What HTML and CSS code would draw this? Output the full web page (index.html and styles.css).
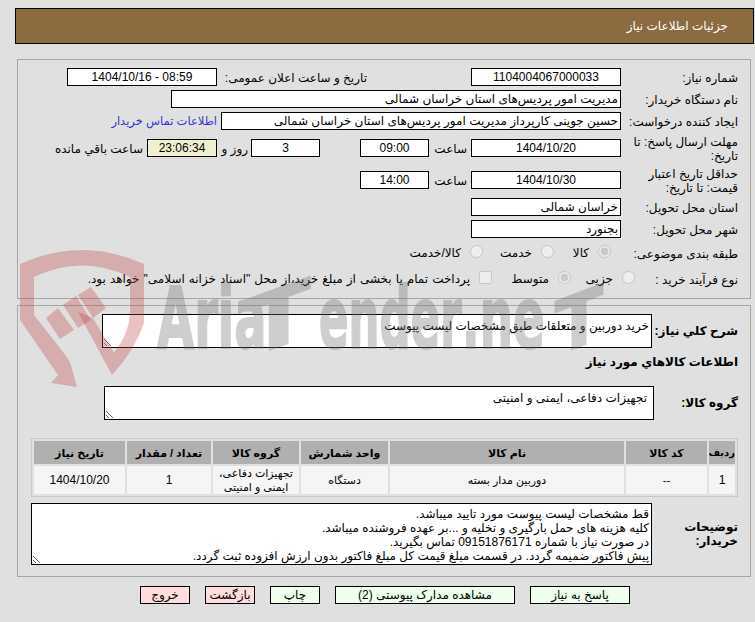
FILE: index.html
```html
<!DOCTYPE html>
<html lang="fa">
<head>
<meta charset="utf-8">
<title>جزئیات اطلاعات نیاز</title>
<link rel="stylesheet" href="styles.css">
</head>
<body>
<header class="title-bar">جزئیات اطلاعات نیاز</header>

<section class="panel panel-top">
  <div class="row">
    <div class="lab">شماره نیاز:</div>
    <div class="box w150 center">1104004067000033</div>
    <div class="lab-mid">تاریخ و ساعت اعلان عمومی:</div>
    <div class="box w150 center">08:59 - 1404/10/16</div>
  </div>
  <div class="row">
    <div class="lab">نام دستگاه خریدار:</div>
    <div class="box w450">مدیریت امور پردیس‌های استان خراسان شمالی</div>
  </div>
  <div class="row">
    <div class="lab">ایجاد کننده درخواست:</div>
    <div class="box w400">حسین جوینی کارپرداز مدیریت امور پردیس‌های استان خراسان شمالی</div>
    <a class="contact" href="#">اطلاعات تماس خریدار</a>
  </div>
  <div class="row tall">
    <div class="lab">مهلت ارسال پاسخ: تا تاریخ:</div>
    <div class="box w150 center">1404/10/20</div>
    <div class="hour">ساعت</div>
    <div class="box w69 center">09:00</div>
    <div class="box w69 center days">3</div>
    <div class="day-word">روز و</div>
    <div class="box w70 center timer">23:06:34</div>
    <div class="remain">ساعت باقي مانده</div>
  </div>
  <div class="row tall">
    <div class="lab">حداقل تاریخ اعتبار قیمت: تا تاریخ:</div>
    <div class="box w150 center">1404/10/30</div>
    <div class="hour">ساعت</div>
    <div class="box w69 center">14:00</div>
  </div>
  <div class="row">
    <div class="lab">استان محل تحویل:</div>
    <div class="box w150">خراسان شمالی</div>
  </div>
  <div class="row">
    <div class="lab">شهر محل تحویل:</div>
    <div class="box w150">بجنورد</div>
  </div>
  <div class="row opts">
    <div class="lab">طبقه بندی موضوعی:</div>
    <label class="opt o57 first10"><input type="radio" name="a" disabled checked>کالا</label>
    <label class="opt o71"><input type="radio" name="a" disabled>خدمت</label>
    <label class="opt"><input type="radio" name="a" disabled>کالا/خدمت</label>
  </div>
  <div class="row opts">
    <div class="lab lab-short">نوع فرآیند خرید :</div>
    <label class="opt o64"><input type="radio" name="b" disabled>جزیی</label>
    <label class="opt o79"><input type="radio" name="b" disabled checked>متوسط</label>
    <label class="opt pay"><input type="checkbox" disabled>پرداخت تمام یا بخشی از مبلغ خرید،از محل "اسناد خزانه اسلامی" خواهد بود.</label>
  </div>
</section>

<section class="panel panel-bottom">
  <div class="row">
    <div class="lab-b w98">شرح کلي نياز:</div>
    <textarea class="area a-need" readonly>خرید دوربین و متعلقات طبق مشخصات لیست پیوست</textarea>
  </div>
  <h2 class="sub">اطلاعات کالاهاي مورد نياز</h2>
  <div class="row group-row">
    <div class="lab-b w96">گروه کالا:</div>
    <textarea class="area a-group" readonly>تجهیزات دفاعی، ایمنی و امنیتی</textarea>
  </div>
  <table class="goods">
    <colgroup>
      <col class="c1"><col class="c2"><col class="c3"><col class="c4"><col class="c5"><col class="c6"><col class="c7">
    </colgroup>
    <thead>
      <tr><th class="th-small">ردیف</th><th>کد کالا</th><th>نام کالا</th><th>واحد شمارش</th><th>گروه کالا</th><th>تعداد / مقدار</th><th>تاریخ نیاز</th></tr>
    </thead>
    <tbody>
      <tr><td class="num">1</td><td>--</td><td>دوربین مدار بسته</td><td>دستگاه</td><td>تجهیزات دفاعی، ایمنی و امنیتی</td><td class="num">1</td><td class="num">1404/10/20</td></tr>
    </tbody>
  </table>
  <div class="row desc-row">
    <div class="lab-b w98">توضیحات خریدار:</div>
    <textarea class="area a-desc" readonly>قط مشخصات لیست پیوست مورد تایید میباشد.
کلیه هزینه های حمل بارگیری و تخلیه و ...بر عهده فروشنده میباشد.
در صورت نیاز با شماره 09151876171 تماس بگیرید.
پیش فاکتور ضمیمه گردد. در قسمت مبلغ قیمت کل مبلغ فاکتور بدون ارزش افزوده ثبت گردد.</textarea>
  </div>
</section>

<nav class="actions">
  <button class="btn go b100">پاسخ به نیاز</button>
  <button class="btn go b180">مشاهده مدارک پیوستی (2)</button>
  <button class="btn go b50">چاپ</button>
  <button class="btn stop b50">بازگشت</button>
  <button class="btn stop b50">خروج</button>
</nav>

<svg class="watermark" viewBox="0 0 755 622" aria-hidden="true">
  <g class="wm-red">
    <path fill-rule="evenodd" d="M20 264Q82 236 144 264L144 323Q135 350 112 375L78 312 93 318 114 353Q128 335 130 315L130 277Q82 254 34 277L34 315 63 352 70 362 77 387 51 383 58 375 20 320Z"/>
    <polygon points="46,318 58,308 74,330 60,339"/>
    <polygon points="63,305 76,296 91,320 78,328"/>
    <polygon points="78,295 91,287 106,308 93,318"/>
  </g>
  <g class="wm-gray">
    <text transform="translate(157 348) scale(.75 1.33)">Aria</text>
    <text transform="translate(247 358) skewY(-20) scale(1.45 1.25)">T</text>
    <text transform="translate(319 348) scale(.68 1.33)">ender</text>
    <text transform="translate(462 348) scale(.73 1.33)">.ne</text>
    <text transform="translate(555 356) skewY(-21) scale(1.1 1.16)">T</text>
  </g>
</svg>
</body>
</html>
```
FILE: styles.css
```css
* { box-sizing: border-box; }
html, body { margin: 0; padding: 0; }
body {
  position: relative;
  width: 755px;
  height: 622px;
  overflow: hidden;
  background: #e0e0e0;
  color: #000;
  direction: rtl;
  font: 12px/14px "Liberation Sans", "DejaVu Sans", sans-serif;
}
.title-bar {
  margin: 8px 1px 0 15px;
  height: 36px;
  padding: 0 25px;
  border: 1px solid #000;
  background: #8b6b3f;
  color: #fff;
  font-size: 12px;
  line-height: 34px;
}
.panel {
  margin-left: 17px;
  margin-right: 4px;
  border: 1px solid #a6a6a6;
}
.panel-top { margin-top: 15px; height: 240px; padding-top: 8px; }
.panel-bottom { margin-top: 6px; height: 272px; padding-top: 8px; }
.row { display: flex; align-items: center; margin-bottom: 4px; min-height: 18px; }
.tall { height: 28px; }
.opts { height: 22px; }
.lab { width: 129px; padding: 2px 12px 0 4px; flex: none; }
.lab-short { width: 115px; }
.box {
  height: 18px;
  border: 1px solid #000;
  background: #fff;
  padding: 0 2px;
  line-height: 16px;
  white-space: nowrap;
  overflow: hidden;
  flex: none;
}
.center { text-align: center; }
.w150 { width: 150px; }
.w450 { width: 450px; }
.w400 { width: 400px; }
.w69 { width: 69px; }
.w70 { width: 70px; }
.lab-mid { width: 254px; padding: 2px 104px 0 0; flex: none; white-space: nowrap; }
.contact { margin-right: 4px; color: #3333dd; text-decoration: none; white-space: nowrap; font-size: 11.5px; }
.hour { width: 42px; padding: 2px 4px 0 0; flex: none; }
.days { margin-right: 40px; }
.day-word { width: 34px; padding: 2px 3px 0 0; flex: none; }
.timer { background: #f0f0d0; }
.remain { margin-right: 4px; padding-top: 2px; white-space: nowrap; }
.opt { display: flex; align-items: center; gap: 9px; flex: none; white-space: nowrap; }
.opt input { margin: -3px 0 0; width: 13px; height: 13px; flex: none; }
.pay { word-spacing: .7px; }
.first10 { margin-right: 10px; }
.o57 { width: 57px; }
.o71 { width: 71px; }
.o64 { width: 64px; }
.o79 { width: 79px; }
.lab-b { font-weight: bold; padding-right: 12px; flex: none; }
.w98 { width: 98px; }
.w96 { width: 96px; }
.area {
  display: block;
  flex: none;
  border: 1px solid #000;
  border-radius: 0;
  background: #fff;
  color: #000;
  margin: 0;
  outline: none;
  overflow: hidden;
  font: inherit;
  direction: rtl;
}
.a-need { width: 550px; height: 34px; padding: 4px 2px; }
.a-group { width: 550px; height: 34px; padding: 4px 6px; }
.a-desc { width: 621px; height: 62px; padding: 3px 2px 0; }
.sub { margin: 7px 12px 0 0; font-size: 12px; line-height: 14px; font-weight: bold; }
.group-row { margin: 17px 0 0; }
.goods {
  margin: 18px 12px 0 13px;
  width: 707px;
  height: 59px;
  table-layout: fixed;
  border-collapse: separate;
  border-spacing: 2px;
  border: 1px solid #c8c8c8;
  font-size: 11px;
}
.c1 { width: 26px; }
.c2 { width: 81px; }
.c3 { width: 234px; }
.c4 { width: 87px; }
.c5 { width: 86px; }
.c6 { width: 84px; }
.c7 { width: 91px; }
.goods th { height: 23px; padding: 0; background: #b0b0b0; font-weight: bold; text-align: center; overflow: hidden; white-space: nowrap; }
.goods .th-small { font-size: 10px; }
.goods td { height: 28px; padding: 0; background: #f5f5f5; text-align: center; line-height: 14px; overflow: hidden; }
.goods .num { font-size: 12px; }
.desc-row { margin: 6px 0 0; }
.actions { display: flex; gap: 15px; margin: 9px 125px 0 0; }
.btn {
  height: 18px;
  margin: 0;
  padding: 0;
  border: 1px solid #000;
  color: #000;
  font: inherit;
  line-height: 16px;
}
.go { background: #eeffee; }
.stop { background: #ffdddd; }
.b100 { width: 100px; }
.b180 { width: 180px; }
.b50 { width: 50px; }
.watermark { position: absolute; left: 0; top: 0; width: 755px; height: 622px; pointer-events: none; direction: ltr; }
.wm-red { fill: rgba(190, 70, 70, .33); }
.wm-gray { fill: #6e6e6e; stroke: #6e6e6e; stroke-width: 1.6px; opacity: .33; font: bold 64px "DejaVu Sans", sans-serif; }
```
